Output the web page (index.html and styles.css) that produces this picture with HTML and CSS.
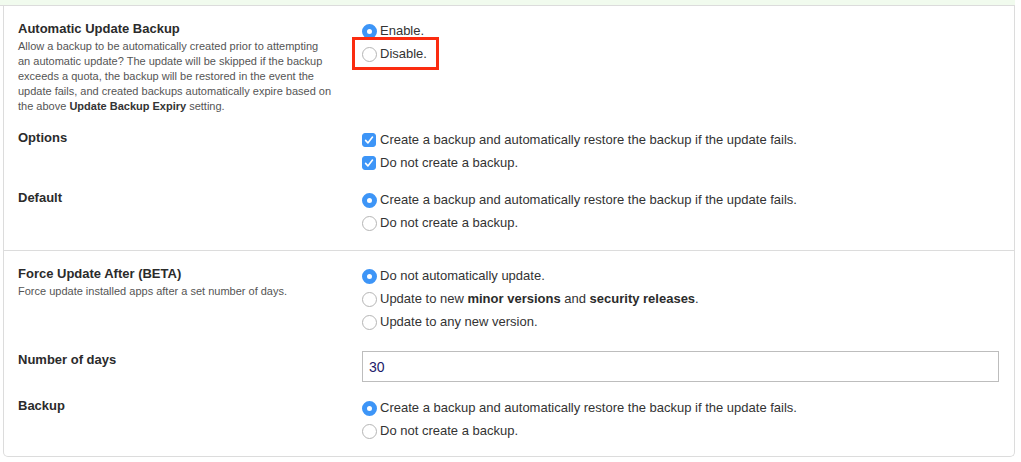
FILE: index.html
```html
<!DOCTYPE html>
<html lang="en">
<head>
    <meta charset="utf-8">
    <title>Update Settings</title>
    <link rel="stylesheet" href="styles.css">
</head>
<body>
    <div class="strip"></div>
    <div class="panel">
        <section class="group first">
            <div class="row">
                <div class="label">
                    <h4>Automatic Update Backup</h4>
                    <p class="help">Allow a backup to be automatically created prior to attempting an automatic update? The update will be skipped if the backup exceeds a quota, the backup will be restored in the event the update fails, and created backups automatically expire based on the above <b>Update Backup Expiry</b> setting.</p>
                </div>
                <div class="choices">
                    <label class="choice"><input type="radio" name="auto" checked>Enable.</label>
                    <label class="choice"><span class="marked"><input type="radio" name="auto">Disable.</span></label>
                </div>
            </div>
            <div class="row">
                <div class="label"><h4>Options</h4></div>
                <div class="choices">
                    <label class="choice"><input type="checkbox" checked>Create a backup and automatically restore the backup if the update fails.</label>
                    <label class="choice"><input type="checkbox" checked>Do not create a backup.</label>
                </div>
            </div>
            <div class="row">
                <div class="label"><h4>Default</h4></div>
                <div class="choices">
                    <label class="choice"><input type="radio" name="default" checked>Create a backup and automatically restore the backup if the update fails.</label>
                    <label class="choice"><input type="radio" name="default">Do not create a backup.</label>
                </div>
            </div>
        </section>
        <section class="group">
            <div class="row">
                <div class="label">
                    <h4>Force Update After (BETA)</h4>
                    <p class="help">Force update installed apps after a set number of days.</p>
                </div>
                <div class="choices">
                    <label class="choice"><input type="radio" name="force" checked>Do not automatically update.</label>
                    <label class="choice"><input type="radio" name="force">Update to new&nbsp;<b>minor versions</b>&nbsp;and&nbsp;<b>security releases</b>.</label>
                    <label class="choice"><input type="radio" name="force">Update to any new version.</label>
                </div>
            </div>
            <div class="row spaced">
                <div class="label"><h4>Number of days</h4></div>
                <div class="field"><input type="text" value="30"></div>
            </div>
            <div class="row">
                <div class="label"><h4>Backup</h4></div>
                <div class="choices">
                    <label class="choice"><input type="radio" name="backup" checked>Create a backup and automatically restore the backup if the update fails.</label>
                    <label class="choice"><input type="radio" name="backup">Do not create a backup.</label>
                </div>
            </div>
        </section>
    </div>
</body>
</html>
```

FILE: styles.css
```css
body {
    margin: 0;
    background: #fff;
    color: #333;
    font-family: "Liberation Sans", Arial, sans-serif;
    font-size: 13px;
}

.strip {
    height: 5px;
    width: 1015px;
    background: #f1fbee;
    border-bottom: 1px solid #dcdcdc;
}

.panel {
    margin: 0 6px 0 3px;
    border: 1px solid #dcdcdc;
    border-top: none;
    border-radius: 0 0 5px 5px;
}

.group {
    display: flex;
    flex-direction: column;
    gap: 14px;
    padding: 13px 15px 16px 14px;
}
.group + .group {
    border-top: 1px solid #dcdcdc;
    padding-top: 13px;
    padding-bottom: 14px;
}

.row {
    display: grid;
    grid-template-columns: 325px 1fr;
    column-gap: 18px;
    align-items: start;
}
.row.spaced {
    margin-top: 3px;
}

.label h4 {
    margin: 0;
    padding-top: 1px;
    font-size: 13px;
    line-height: 18px;
    font-weight: bold;
    color: #2b2b2b;
}
.help {
    margin: 1px 0 0;
    max-width: 314px;
    font-size: 11px;
    line-height: 15px;
    color: #555;
}
.help b {
    color: #333;
}

.choices {
    display: flex;
    flex-direction: column;
}
.choice {
    display: flex;
    align-items: center;
    height: 23px;
    white-space: nowrap;
}
.choice b {
    color: #2b2b2b;
}
.marked {
    position: relative;
    display: inline-flex;
    align-items: center;
}
.marked::after {
    content: "";
    position: absolute;
    top: -9px;
    bottom: -8px;
    left: -9px;
    right: -12px;
    border: 3px solid #fb2c10;
}

input[type=radio],
input[type=checkbox] {
    appearance: none;
    box-sizing: border-box;
    flex: none;
    width: 15px;
    height: 15px;
    margin: 1px 3px 0 1px;
    border: 1px solid #b5b5b5;
    background: #fff;
}
input[type=radio] {
    border-radius: 50%;
}
input[type=radio]:checked {
    border: 5px solid #3d95f7;
    background: #fff;
}
input[type=checkbox] {
    width: 14px;
    height: 14px;
    margin-right: 4px;
    border-radius: 3px;
}
input[type=checkbox]:checked {
    border-color: #3d95f7;
    background: #3d95f7 url("data:image/svg+xml,%3Csvg xmlns='http://www.w3.org/2000/svg' viewBox='0 0 14 14'%3E%3Cpath d='M3.6 7.4l2.3 2.5 4.6-5.8' fill='none' stroke='white' stroke-width='1.6' stroke-linecap='round' stroke-linejoin='round'/%3E%3C/svg%3E") center / 14px 14px no-repeat;
}

.field {
    padding: 1px 0 0 1px;
}
.field input {
    box-sizing: border-box;
    display: block;
    width: 637px;
    height: 31px;
    padding: 0 6px;
    border: 1px solid #bdbdbd;
    border-radius: 0;
    font-family: inherit;
    font-size: 14px;
    color: #1d1a6a;
    outline: none;
}
```
